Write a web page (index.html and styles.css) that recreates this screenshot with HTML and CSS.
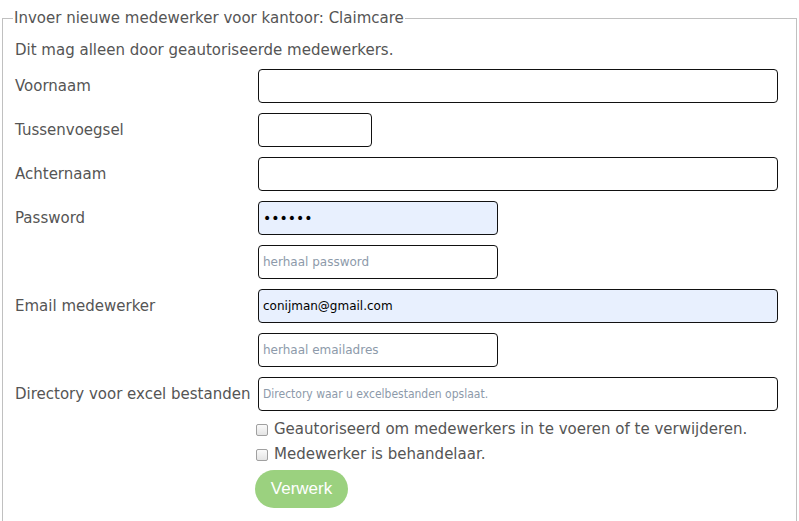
FILE: index.html
```html
<!DOCTYPE html>
<html>
<head>
<meta charset="utf-8">
<link rel="stylesheet" href="styles.css">
</head>
<body>
<fieldset class="box">
  <legend class="legend">Invoer nieuwe medewerker voor kantoor: Claimcare</legend>
  <p class="intro">Dit mag alleen door geautoriseerde medewerkers.</p>
  <div class="form">
    <label class="label">Voornaam</label>
    <div class="field"><input class="input wide" type="text"></div>
    <label class="label">Tussenvoegsel</label>
    <div class="field"><input class="input small" type="text"></div>
    <label class="label">Achternaam</label>
    <div class="field"><input class="input wide" type="text"></div>
    <label class="label">Password</label>
    <div class="field"><input class="input mid filled pw" type="password" value="secret"></div>
    <span class="label"></span>
    <div class="field"><input class="input mid" type="password" placeholder="herhaal password"></div>
    <label class="label">Email medewerker</label>
    <div class="field"><input class="input wide filled" type="text" value="conijman@gmail.com"></div>
    <span class="label"></span>
    <div class="field"><input class="input mid" type="text" placeholder="herhaal emailadres"></div>
    <label class="label">Directory voor excel bestanden</label>
    <div class="field"><input class="input wide dir" type="text" placeholder="Directory waar u excelbestanden opslaat."></div>
    <span class="label"></span>
    <div class="checks">
      <label class="check"><input type="checkbox" class="cb"> Geautoriseerd om medewerkers in te voeren of te verwijderen.</label>
      <label class="check"><input type="checkbox" class="cb"> Medewerker is behandelaar.</label>
      <button class="btn">Verwerk</button>
    </div>
  </div>
</fieldset>
</body>
</html>
```
FILE: styles.css
```css
html, body {
  margin: 0;
  padding: 0;
  background: #fff;
}
body {
  font-family: "DejaVu Sans", sans-serif;
  color: #555;
  font-size: 15px;
}
.box {
  margin: 9px 2px 0 2px;
  padding: 0 0 20px 12px;
  border: 1px solid #c0c0c0;
  min-height: 520px;
}
.legend {
  padding: 0 1px;
  margin-left: -2px;
  font-size: 15px;
  line-height: 18px;
  color: #555;
}
.intro {
  margin: 13px 0 0 0;
  line-height: 20px;
}
.form {
  display: grid;
  grid-template-columns: 243px 1fr;
  row-gap: 10px;
  margin-top: 9px;
  padding-right: 18px;
}
.label {
  display: flex;
  align-items: center;
  height: 34px;
  line-height: 18px;
}
.field {
  display: flex;
  height: 34px;
}
.input {
  box-sizing: border-box;
  height: 34px;
  border: 1px solid #111;
  border-radius: 4px;
  padding: 0 4px;
  font-family: "DejaVu Sans", sans-serif;
  font-size: 12px;
  color: #000;
  background: #fff;
  outline: none;
}
.input::placeholder {
  color: #8d9aaa;
}
.wide { width: 520px; }
.small { width: 114px; }
.mid { width: 240px; }
.filled { background: #e8f0fe; }
.pw { font-size: 14px; letter-spacing: 0; }
.dir::placeholder {
  font-family: "DejaVu Sans Condensed", "DejaVu Sans", sans-serif;
  font-size: 12px;
}
.checks {
  display: flex;
  flex-direction: column;
  align-items: flex-start;
  margin-top: -4px;
}
.check {
  display: flex;
  align-items: center;
  font-size: 15px;
  line-height: 25px;
  margin-left: -3px;
}
.cb {
  appearance: none;
  -webkit-appearance: none;
  box-sizing: border-box;
  width: 12px;
  height: 12px;
  margin: 0 6px 0 1px;
  border: 1px solid #a0a0a0;
  border-radius: 2px;
  background: linear-gradient(#fafafa, #e4e4e4);
}
.btn {
  margin-top: 3px;
  margin-left: -3px;
  width: 93px;
  height: 38px;
  border: none;
  border-radius: 19px;
  background: #9bd17f;
  color: #fff;
  font-family: "Liberation Sans", Arial, sans-serif;
  font-size: 17px;
}
```
